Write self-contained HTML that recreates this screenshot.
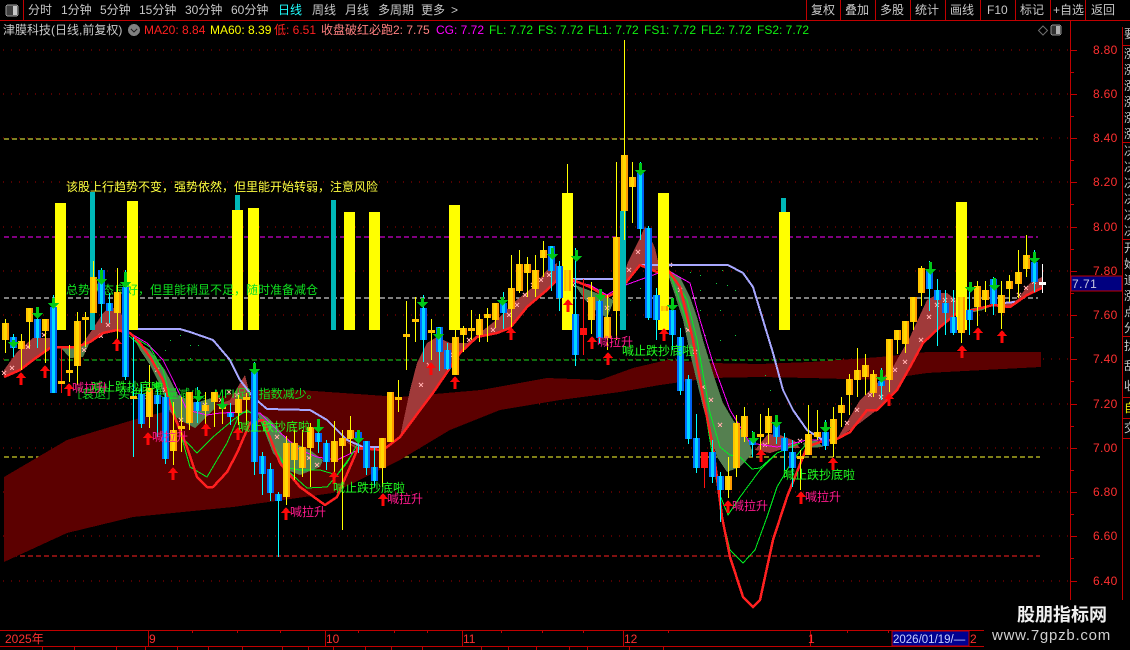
<!DOCTYPE html>
<html><head><meta charset="utf-8"><style>
html,body{margin:0;padding:0;background:#000;width:1130px;height:650px;overflow:hidden}
svg{position:absolute;left:0;top:0;display:block}
text{font-family:"Liberation Sans","WenQuanYi Zen Hei","Noto Sans CJK SC",sans-serif;font-size:12px}
.n{fill:#c8c8c8}.m{fill:#ff1a8c}.z{fill:#20ff20}.p{fill:#ff3030}
</style></head><body>
<svg id="s" width="1130" height="650" viewBox="0 0 1130 650" shape-rendering="crispEdges">
<defs>
<linearGradient id="gy"><stop offset="0" stop-color="#ffc400"/><stop offset=".28" stop-color="#ffc400"/><stop offset=".28" stop-color="#ffd800"/><stop offset=".72" stop-color="#ffd800"/><stop offset=".72" stop-color="#ff9a00"/><stop offset="1" stop-color="#ff9a00"/></linearGradient>
<linearGradient id="gb"><stop offset="0" stop-color="#0070ff"/><stop offset=".28" stop-color="#0070ff"/><stop offset=".28" stop-color="#00d8ff"/><stop offset=".72" stop-color="#00d8ff"/><stop offset=".72" stop-color="#0060f0"/><stop offset="1" stop-color="#0060f0"/></linearGradient>
</defs>
<g id="grid"></g>
<path fill="#5c0000" d="M4 477L67 440L133 420L197 403L247 390L300 390L400 397L481 390L547 378L600 380L633 368L667 360L710 363L760 364L810 362L880 357L927 352L1041 352V367L927 373L880 380L810 378L760 377L710 378L660 385L620 392L560 400L500 410L450 430L400 460L333 493L233 507L133 517L67 533L4 562Z"/>
<g fill="#a03a3a">
<path d="M4 377L4 370L17 352L33 338L50 338L57 347L50 348L33 360L20 370Z"/>
<path d="M80 347L90 333L103 313L110 307L120 310L128 332L117 330L103 333L90 342Z"/>
<path d="M215 405L230 400L245 375L250 395L235 405Z"/>
<path d="M345 441L365 450L358 450Z"/>
<path d="M385 445L400 437L410 390L417 363L427 343L437 337L450 343L467 343L500 317L513 303L533 287L547 270L557 263L557 280L547 290L527 307L510 328L497 333L477 337L460 353L435 390L400 437Z"/>
<path d="M618 292L628 262L640 238L645 226L655 248L660 270L650 270L640 265L628 280Z"/>
<path d="M755 450L768 434L780 435L795 441L800 448L785 448L770 453Z"/>
<path d="M837 439L860 400L893 367L910 337L927 300L940 293L947 293L960 303L967 310L957 313L940 327L923 343L910 367L897 390L877 410L860 423Z"/>
<path d="M993 305L1017 300L1030 283L1042 277V288L1027 295L1010 307Z"/>
</g>
<g fill="#558050">
<path d="M60 347L77 347L90 342L83 357L70 358Z"/>
<path d="M135 340L150 350L165 370L178 395L195 403L215 397L215 408L195 428L180 420L170 412L160 385L150 365L140 350Z"/>
<path d="M257 412L267 417L277 427L287 440L310 450L323 460L320 467L300 475L287 470L273 453Z"/>
<path d="M575 285L607 297L614 300L607 318L595 310L585 300Z"/>
<path d="M669 270L680 277L690 297L697 317L703 340L713 373L723 403L733 420L747 437L753 453L740 467L727 472L717 457L703 407L690 353L683 320L669 277Z"/>
<path d="M803 443L817 440L823 447L805 448Z"/>
<path d="M967 310L973 308L993 305L983 310L970 313Z"/>
</g>
<g id="xm" fill="none" stroke="#ffa8a8"></g>
<g id="dots" fill="#10c040"></g>
<g fill="none" stroke="#ff00ff">
<path d="M128 332L147 343L163 360L173 380L187 410L207 415L220 413L247 412L260 413L277 430L300 450L317 457L337 460L358 450"/>
<path d="M573 282L590 285L607 295L620 287L667 270L690 283L700 320L713 363L730 410L750 443L777 447L807 440L823 440"/>
</g>
<g fill="none" stroke="#00f020">
<path d="M128 333L150 347L163 370L170 397L182 437L197 453L213 437L233 420L247 410L260 420L283 467L300 470L320 470L337 475L353 453"/>
<path d="M128 335L153 357L163 380L172 403L190 467L207 477L227 443L240 413L250 412L260 420L287 470L307 488L327 487L347 463L358 443"/>
<path d="M670 272L687 300L697 340L710 413L720 447L730 455L740 457L752 469L760 468L777 453L800 443"/>
<path d="M670 273L693 340L703 397L718 490L728 515L740 497L760 470L777 453L800 443"/>
<path d="M703 397L723 520L730 550L743 563L755 550L767 517L777 487L793 460L807 443"/>
</g>
<g fill="none" stroke="#a8a8ff" stroke-width="2">
<path d="M128 329L180 329L190 332L213 340L230 360L240 380L253 397L267 409L310 410L327 420L347 440L363 447L383 447"/>
<path d="M573 279L620 279"/>
<path d="M640 265L728 265L743 273L753 287L763 320L773 353L783 390L793 410L807 430L823 440"/>
<path d="M1003 303L1015 302"/>
</g>
<path fill="none" stroke="#ff2020" stroke-width="2.5" stroke-linejoin="round" d="M4 377L20 370L33 360L50 348L57 347L77 347L90 342L103 333L117 330L130 333L140 343L150 357L163 380L173 413L187 447L197 477L207 487L213 487L227 472L237 453L250 423L263 420L280 463L300 487L325 505L337 497L353 460L358 448L383 450L400 437L435 390L460 353L477 337L497 333L510 328L527 307L547 290L557 280L573 280L590 287L607 297L620 290L640 265L657 272L668 270L680 287L693 340L703 397L713 447L722 517L730 557L743 597L753 607L760 600L773 540L787 497L803 457L807 447L820 442L837 439L850 432L867 410L877 410L897 390L910 367L923 343L940 327L957 313L973 310L993 305L1010 307L1027 295L1042 288"/>
<g id="bars"></g>
<text x="66" y="191" fill="#ffff40">该股上行趋势不变，强势依然，但里能开始转弱，注意风险</text>
<text x="66" y="294" fill="#10e020">总势状态良好，但里能稍显不足，随时准备减仓</text>
<text x="70" y="398" fill="#10e020">［衰退］买进多头量减少。MFI促进指数减少。</text>
<g id="candles"></g>
<g id="arrows"></g>
<g>
<text x="91" y="391" class="z">喊止跌抄底啦</text><text x="238" y="431" class="z">喊止跌抄底啦</text><text x="333" y="492" class="z">喊止跌抄底啦</text><text x="622" y="355" class="z">喊止跌抄底啦</text><text x="783" y="479" class="z">喊止跌抄底啦</text>
<text x="72" y="392" class="m">喊拉升</text><text x="152" y="441" class="m">喊拉升</text><text x="290" y="516" class="m">喊拉升</text><text x="387" y="503" class="m">喊拉升</text><text x="597" y="346" class="m">喊拉升</text><text x="732" y="510" class="m">喊拉升</text><text x="805" y="501" class="m">喊拉升</text>
</g>
<!-- axis -->
<path fill="#c00000" d="M1070 21h1V600h-1zM1122 27h1V600h-1z"/>
<g id="ticks" fill="#c00000"></g>
<g class="p" style="letter-spacing:.3px">
<text x="1093" y="54">8.80</text><text x="1093" y="98">8.60</text><text x="1093" y="142">8.40</text><text x="1093" y="186">8.20</text><text x="1093" y="231">8.00</text><text x="1093" y="275">7.80</text><text x="1093" y="319">7.60</text><text x="1093" y="363">7.40</text><text x="1093" y="408">7.20</text><text x="1093" y="452">7.00</text><text x="1093" y="496">6.80</text><text x="1093" y="540">6.60</text><text x="1093" y="585">6.40</text>
</g>
<rect x="1071" y="276" width="51" height="15" fill="#000080" stroke="#c00000"/>
<text x="1072" y="288" fill="#c8c8e0" style="letter-spacing:.5px">7.71</text>
<!-- far right cut text -->
<g class="n">
<text x="1124" y="38">要</text>
<text x="1124" y="58">涨</text><text x="1124" y="74">涨</text><text x="1124" y="90">涨</text><text x="1124" y="106">涨</text><text x="1124" y="122">涨</text><text x="1124" y="138">涨</text>
<text x="1124" y="155">决</text><text x="1124" y="171">决</text><text x="1124" y="187">决</text><text x="1124" y="203">决</text><text x="1124" y="219">决</text><text x="1124" y="235">决</text>
<text x="1124" y="252">开</text><text x="1124" y="268">始</text><text x="1124" y="284">追</text><text x="1124" y="300">涨</text><text x="1124" y="316">点</text><text x="1124" y="332">分</text>
<text x="1124" y="350">扰</text><text x="1124" y="370">乱</text><text x="1124" y="390">收</text>
<text x="1124" y="412" fill="#e8e800">自</text><text x="1124" y="432">交</text>
</g>
<path fill="#c00000" d="M1122 45h8v1h-8zM1122 142h8v1h-8zM1122 239h8v1h-8zM1122 336h8v1h-8zM1122 397h8v1h-8zM1122 418h8v1h-8zM1122 438h8v1h-8z"/>
<!-- top bars -->
<path fill="#c00000" d="M0 20h1130v1H0zM23 0h1v20h-1zM806 0h1v20h-1zM840 0h1v20h-1zM875 0h1v20h-1zM910 0h1v20h-1zM945 0h1v20h-1zM980 0h1v20h-1zM1015 0h1v20h-1zM1050 0h1v20h-1zM1085 0h1v20h-1z"/>
<rect x="6" y="5" width="12" height="11" rx="2" fill="#404040" stroke="#a0a0a0"/><rect x="13" y="6" width="4" height="9" fill="#c8c8c8"/>
<g class="n">
<text x="28" y="14">分时</text><text x="61" y="14">1分钟</text><text x="100" y="14">5分钟</text><text x="139" y="14">15分钟</text><text x="185" y="14">30分钟</text><text x="231" y="14">60分钟</text>
<text x="278" y="14" fill="#20ffff">日线</text><text x="312" y="14">周线</text><text x="345" y="14">月线</text><text x="378" y="14">多周期</text><text x="421" y="14">更多</text><text x="451" y="14">&gt;</text>
<text x="811" y="14">复权</text><text x="845" y="14">叠加</text><text x="880" y="14">多股</text><text x="915" y="14">统计</text><text x="950" y="14">画线</text><text x="987" y="14">F10</text><text x="1020" y="14">标记</text><text x="1053" y="14">+自选</text><text x="1091" y="14">返回</text>
</g>
<text x="3" y="34" class="n">津膜科技(日线,前复权)</text>
<circle cx="134" cy="30" r="6" fill="#808080"/><path d="M131 29l3 3 3-3" fill="none" stroke="#202020"/>
<text x="144" y="34" fill="#ff2020">MA20: 8.84</text><text x="210" y="34" fill="#ffff00">MA60: 8.39</text><text x="274" y="34" fill="#ff2020">低: 6.51</text><text x="321" y="34" fill="#ff8080">收盘破红必跑2: 7.75</text><text x="436" y="34" fill="#ff00ff">CG: 7.72</text><text x="489" y="34" fill="#10f010">FL: 7.72</text><text x="538" y="34" fill="#10f010">FS: 7.72</text><text x="588" y="34" fill="#10f010">FL1: 7.72</text><text x="644" y="34" fill="#10f010">FS1: 7.72</text><text x="701" y="34" fill="#10f010">FL2: 7.72</text><text x="757" y="34" fill="#10f010">FS2: 7.72</text>
<path d="M1043 26l4.500 4.500-4.500 4.500-4.500-4.500z" fill="none" stroke="#707070" shape-rendering="auto"/>
<rect x="1051" y="25" width="10" height="10" rx="2" fill="#303030" stroke="#909090"/><rect x="1056" y="26" width="4" height="8" fill="#b0b0b0"/>
<!-- bottom axis -->
<path fill="#c00000" d="M0 630h984v1H0zM0 646h984v1H0zM148 630h1v16h-1zM325 630h1v16h-1zM462 630h1v16h-1zM623 630h1v16h-1zM810 630h1v16h-1z"/>
<g id="bt" fill="#c00000"></g>
<rect x="892" y="631" width="77" height="15" fill="#000090" stroke="#c00000"/>
<text x="5" y="643" class="p">2025年</text><text x="149" y="643" class="p">9</text><text x="326" y="643" class="p">10</text><text x="463" y="643" class="p">11</text><text x="624" y="643" class="p">12</text><text x="808" y="643" class="p">1</text>
<text x="893" y="643" fill="#c8d0ff" style="font-size:11.500px">2026/01/19/—</text><text x="970" y="643" class="p">2</text>
<!-- watermark -->
<rect x="985" y="600" width="145" height="50" fill="#000"/>
<path fill="#c00000" d="M1070 590h1v10h-1zM1122 590h1v10h-1z"/>
<text x="1017" y="621" fill="#f0f0f0" style="font-size:18px;font-weight:bold;font-family:'Noto Sans CJK SC','WenQuanYi Zen Hei',sans-serif">股朋指标网</text>
<text x="992" y="640" fill="#d0d0d0" style="font-size:15px;letter-spacing:.75px">www.7gpzb.com</text>
</svg>
<script>
var NS="http://www.w3.org/2000/svg";
function el(g,n,a){var e=document.createElementNS(NS,n);for(var k in a)e.setAttribute(k,a[k]);document.getElementById(g).appendChild(e);return e}
function r(g,x,y,w,h,f){el(g,"rect",{x:x,y:y,width:w,height:h,fill:f})}
// grid dotted
for(var i=0;i<13;i++){var y=Math.round(49.5+44.25*i);el("grid","path",{d:"M3 "+y+"H1068",stroke:"#a80000","stroke-dasharray":"1 7"});
 r("ticks",1071,y,6,1,"#c00000");r("ticks",1071,Math.round(y+22),3,1,"#c00000")}
[[139,"#ffff40",1038],[237,"#ff00ff",1038],[298,"#ffffff",1038],[360,"#20e020",1040],[457,"#ffff30",1040],[556,"#ff2020",1040]].forEach(function(l){
 el("grid","path",{d:"M4 "+l[0]+"H"+l[2],stroke:l[1],"stroke-dasharray":"5 3"})});
// volume bars
[[55,203],[127,201],[232,210],[248,208],[344,212],[369,212],[449,205],[562,193],[658,193],[779,212],[956,202]].forEach(function(b){r("bars",b[0],b[1],11,330-b[1],"#ffff00")});
[[90,192,330],[235,195,210],[331,200,330],[620,211,330],[781,198,212]].forEach(function(b){r("bars",b[0],b[1],b[0]==620?6:5,b[2]-b[1],"#00b8b8")});
// candles: k,type,wickTop,bodyTop,bodyBot,wickBot
var C=[[0,"y",319,323,340,353],[1,"b",334,337,348,357],[2,"y",334,341,349,370],[3,"y",308,308,322,348],[4,"b",313,319,338,348],[5,"y",319,319,331,363],[6,"b",295,307,393,393],[7,"r",348,381,383,393],[8,"y",345,370,373,382],[9,"y",312,321,366,385],[10,"y",312,317,318,347],[11,"y",261,277,313,313],[12,"b",268,270,304,323],[13,"b",293,303,311,323],[14,"y",268,292,313,347],[15,"b",270,287,377,380],[16,"b",337,396,397,457],[17,"b",384,394,424,428],[18,"y",365,388,417,428],[19,"b",387,395,404,437],[20,"b",393,397,459,464],[21,"y",402,430,451,465],[22,"y",397,426,428,452],[23,"y",392,392,423,430],[24,"b",387,402,411,423],[25,"y",392,405,411,430],[26,"y",392,392,402,427],[27,"y",398,406,408,424],[28,"b",403,413,417,425],[29,"y",395,399,413,425],[30,"y",393,397,399,425],[31,"b",362,372,462,475],[32,"b",452,456,474,495],[33,"b",463,469,493,501],[34,"b",492,494,501,557],[35,"y",436,443,497,505],[36,"y",430,443,460,480],[37,"y",430,447,468,477],[38,"y",423,427,448,487],[39,"b",420,433,442,453],[40,"b",440,443,462,470],[41,"y",421,441,462,477],[42,"y",430,438,446,530],[43,"y",416,430,439,453],[44,"b",430,432,438,453],[45,"b",441,441,468,475],[46,"b",448,467,481,487],[47,"y",438,438,468,487],[48,"y",392,392,442,442],[49,"y",380,397,398,412],[50,"y",301,334,335,370],[51,"y",297,319,321,342],[52,"b",295,308,340,362],[53,"y",319,330,332,360],[54,"b",327,327,352,371],[55,"b",343,350,369,370],[56,"y",330,337,375,375],[57,"y",326,328,335,352],[58,"y",310,328,329,340],[59,"y",314,319,335,342],[60,"y",308,314,318,342],[61,"y",303,303,320,328],[62,"b",292,303,313,329],[63,"y",255,288,309,327],[64,"y",250,264,291,293],[65,"y",257,264,273,297],[66,"y",255,270,289,297],[67,"y",241,250,258,277],[68,"b",246,246,271,291],[69,"b",261,266,298,311],[70,"y",164,270,291,300],[71,"b",248,314,355,366],[72,"r",279,328,335,355],[73,"y",282,297,320,334],[74,"b",293,301,338,343],[75,"y",295,317,338,350],[76,"y",162,237,311,340],[77,"y",40,155,211,240],[78,"y",162,177,187,223],[79,"b",162,173,229,240],[80,"b",226,228,318,320],[81,"b",288,295,320,340],[82,"y",280,306,311,320],[83,"b",298,310,335,350],[84,"b",328,337,391,395],[85,"b",375,379,439,444],[86,"b",414,438,468,473],[87,"r",452,452,468,488],[88,"b",440,452,477,483],[89,"b",472,476,490,522],[90,"y",457,476,490,498],[91,"y",415,423,468,477],[92,"y",407,416,437,442],[93,"b",431,440,445,457],[94,"y",414,434,436,457],[95,"y",408,416,433,444],[96,"b",415,425,437,444],[97,"b",433,438,451,470],[98,"b",440,452,468,487],[99,"y",450,456,458,490],[100,"y",405,434,455,455],[101,"y",410,432,437,440],[102,"b",420,432,446,450],[103,"y",407,419,444,457],[104,"y",397,405,413,427],[105,"y",374,379,395,415],[106,"y",348,370,380,397],[107,"y",354,365,377,395],[108,"y",370,374,393,397],[109,"b",368,381,386,400],[110,"y",339,339,380,392],[111,"y",330,330,340,354],[112,"y",321,321,344,353],[113,"y",297,297,322,330],[114,"y",266,268,293,306],[115,"b",261,269,289,311],[116,"b",279,290,300,346],[117,"b",290,303,313,335],[118,"b",290,317,333,335],[119,"y",297,297,333,343],[120,"b",290,310,320,335],[121,"y",281,286,307,326],[122,"y",281,290,300,312],[123,"b",277,279,304,315],[124,"y",281,295,313,329],[125,"y",275,281,289,302],[126,"y",250,272,284,298],[127,"y",235,255,269,277],[128,"b",250,262,282,292],[129,"w",264,282,285,293]];
var W={y:"#ffff00",b:"#00ffff",r:"#ff1010",w:"#ffffff"},F={y:"url(#gy)",b:"url(#gb)",r:"#ff1010",w:"#ffffff"};
C.forEach(function(c){var x=Math.round(4.5+8.04*c[0]);
 r("candles",x,c[2],1,c[5]-c[2],W[c[1]]);
 var h=c[4]-c[3];
 if(h<=3||c[1]=="w"){r("candles",x-3,c[3],7,Math.max(h,3),c[1]=="w"?"#fff":"#ffc000")}
 else r("candles",x-3,c[3],7,h,F[c[1]]);
});
// red up arrows
[[21,372],[45,365],[69,383],[117,338],[148,432],[173,467],[206,423],[238,427],[286,507],[334,471],[383,493],[431,362],[455,376],[511,327],[568,299],[592,336],[608,352],[664,328],[728,500],[761,449],[801,491],[833,457],[889,393],[962,345],[978,327],[1002,330]].forEach(function(a){
 el("arrows","path",{d:"M"+a[0]+" "+a[1]+"l5 6h-3.500v7h-3v-7h-3.500z".replace(/\.500/g,".5"),fill:"#ff0808"})});
// green down arrows (x, top, tip)
[[13,340,348],[37,307,319],[53,298,309],[101,270,285],[125,272,288],[157,382,390],[198,390,402],[222,398,410],[254,363,375],[318,419,433],[358,430,444],[422,298,308],[438,328,340],[502,297,306],[552,248,260],[576,250,262],[600,289,301],[640,163,176],[672,298,311],[753,432,444],[776,415,428],[825,422,433],[881,370,383],[930,262,275],[970,282,293],[994,278,291],[1034,252,264]].forEach(function(a){
 var h=a[2]-a[1],s=Math.max(h-6,2);
 el("arrows","path",{d:"M"+(a[0]-1)+" "+a[1]+"h3v"+s+"h4l-5.500 6-5.500-6h4z".replace(/\.500/g,".5"),fill:"#00c818"})});
// x marks
[[4,373],[12,368],[28,347],[44,335],[84,350],[101,336],[108,325],[157,370],[165,390],[181,420],[205,405],[221,400],[229,392],[237,395],[277,437],[309,458],[317,465],[421,385],[429,365],[453,355],[469,340],[493,330],[509,315],[517,305],[525,295],[533,285],[541,280],[549,275],[565,272],[573,285],[589,300],[607,308],[629,270],[638,252],[661,265],[670,265],[680,290],[688,330],[695,352],[703,387],[711,400],[720,425],[745,435],[765,445],[785,440],[800,441],[847,423],[857,410],[870,395],[881,397],[895,370],[905,362],[921,340],[929,317],[937,305],[945,300],[953,300],[1019,295],[1026,288],[1034,282]].forEach(function(a){
 el("xm","path",{d:"M"+(a[0]-2)+" "+(a[1]-2)+"l4 4m0-4l-4 4"})});
// green dots
[[170,340],[180,335],[190,345],[165,350],[198,345],[190,358],[180,360],[630,300],[640,288],[690,272],[700,275],[710,265],[716,283],[722,270],[727,285],[700,290],[720,310],[735,290],[700,310],[735,335],[705,335],[720,340],[735,360],[765,375],[770,390]].forEach(function(a){r("dots",a[0],a[1],1,1,"#10d040")});
// bottom ticks
[192,237,280,358,394,427,501,542,583,668,847,888].forEach(function(x){r("bt",x,630,1,3,"#c00000")});
[42,74,116,145,177,208,242,282,308,333,365,391,422,481,508,536,569,587,629,663].forEach(function(x){r("bt",x,647,1,3,"#c00000")});
</script>
</body></html>
